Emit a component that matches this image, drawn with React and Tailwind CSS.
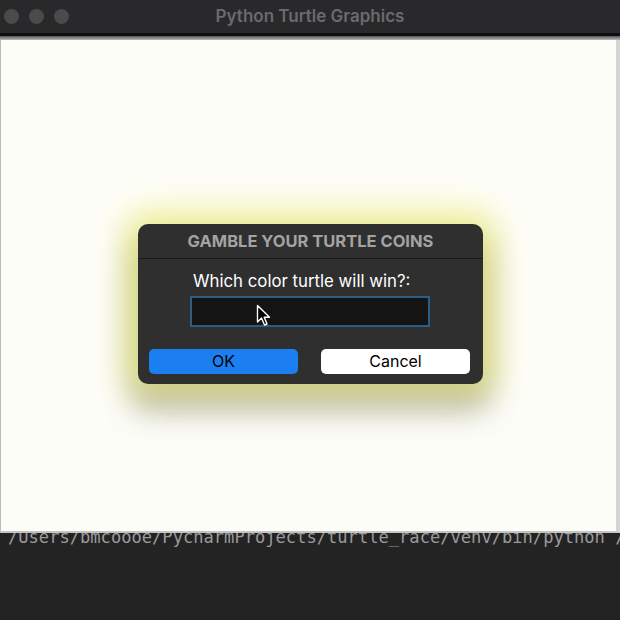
import React from "react";

function Cursor() {
  return (
    <svg
      className="absolute left-[64px] top-[6px]"
      width="16"
      height="24"
      viewBox="0 0 16 24"
    >
      <path
        d="M1.5 1.5 L1.5 18 L5.5 14 L8.5 21 L11 20 L8.2 13.2 L13.5 13.2 Z"
        fill="#000"
        stroke="#fff"
        strokeWidth="1.4"
        strokeLinejoin="round"
      />
    </svg>
  );
}

export default function App() {
  return (
    <div
      className="w-[620px] h-[620px] flex flex-col overflow-hidden bg-[#232323]"
      style={{ fontFamily: "Inter, 'Noto Sans', sans-serif" }}
    >
      {/* Title bar */}
      <div className="h-[33px] bg-[#29292c] flex items-center relative shrink-0">
        <div className="flex items-center gap-[10px] pl-[4px]">
          <div className="w-[15px] h-[15px] rounded-full bg-[#4b4b4b]" />
          <div className="w-[15px] h-[15px] rounded-full bg-[#4b4b4b]" />
          <div className="w-[15px] h-[15px] rounded-full bg-[#4b4b4b]" />
        </div>
        <div className="absolute inset-0 flex items-center justify-center text-[17px] font-semibold text-[#6b6b6b]">
          Python Turtle Graphics
        </div>
      </div>
      <div className="h-[3px] bg-[#0d0d14] shrink-0" />
      <div className="h-[4px] bg-gradient-to-b from-[#555] to-[#bbb] shrink-0" />

      {/* Canvas */}
      <div className="h-[493px] shrink-0 bg-[#fdfdf8] relative border-l border-l-[#bdbdbd] border-r-[4px] border-r-[#d4d4d4] border-b-[2px] border-b-[#c4c4c4]">
        <div className="absolute left-[137px] top-[184px] w-[345px] h-[160px] rounded-[10px] bg-[#2f2f2f] flex flex-col shadow-[0_0_30px_14px_rgba(235,235,100,0.6),0_20px_30px_6px_rgba(90,90,90,0.45)]">
          <div className="h-[35px] flex items-center justify-center text-[16.5px] font-bold text-[#a3a3a3] border-b border-b-[#1a1a1a]">
            GAMBLE YOUR TURTLE COINS
          </div>
          <div className="pl-[55px] pt-[12px] text-[16.8px] leading-[20px] text-white">
            Which color turtle will win?:
          </div>
          <div className="relative ml-[52px] mt-[5px] w-[240px] h-[31px] bg-[#141414] border-2 border-[#2c5d84]">
            <Cursor />
          </div>
          <div className="flex justify-between pl-[11px] pr-[13px] mt-[22px]">
            <button className="w-[149px] h-[25px] rounded-[5px] bg-[#1b7ff2] text-black text-[16px] leading-[25px]">
              OK
            </button>
            <button className="w-[149px] h-[25px] rounded-[5px] bg-white text-black text-[16px] leading-[25px]">
              Cancel
            </button>
          </div>
        </div>
      </div>

      {/* Terminal */}
      <div className="flex-1 bg-[#232323] overflow-hidden relative">
        <div
          className="pl-[8px] mt-[-6px] text-[17.1px] leading-[20px] text-[#9a9a9a] whitespace-nowrap"
          style={{ fontFamily: "'DejaVu Sans Mono', monospace" }}
        >
          /Users/bmcoooe/PycharmProjects/turtle_race/venv/bin/python /Users
        </div>
      </div>
    </div>
  );
}
